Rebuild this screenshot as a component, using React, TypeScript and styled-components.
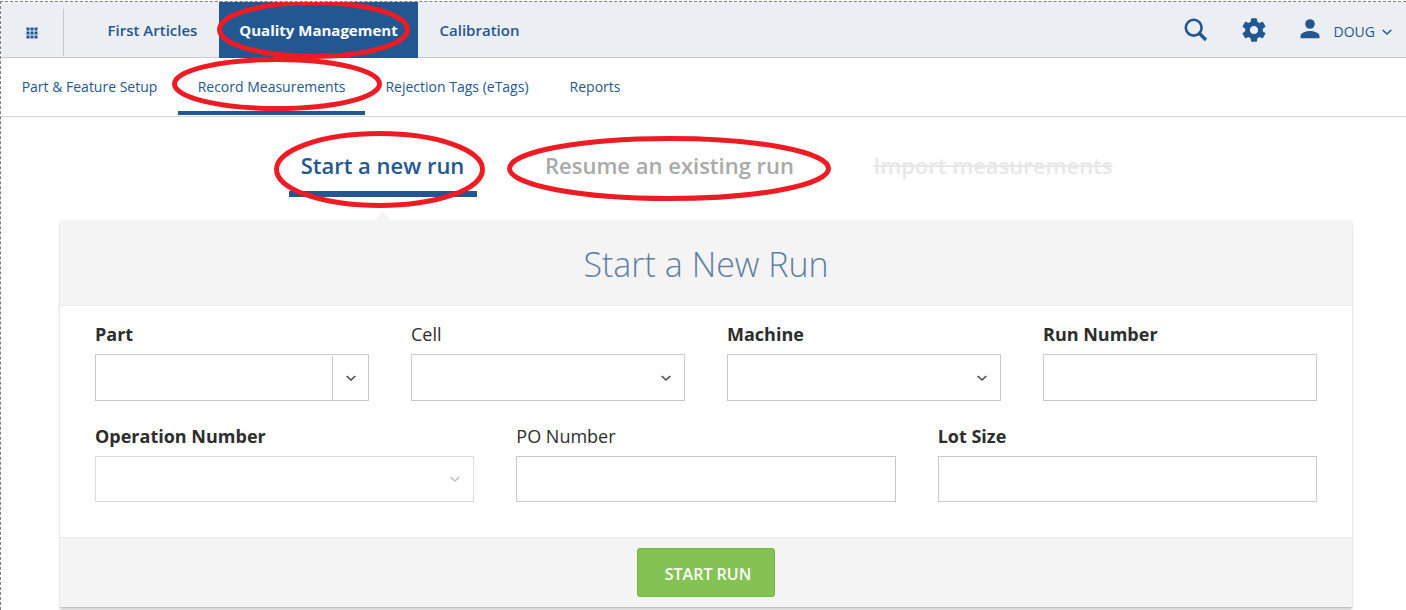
import React, { useId } from "react";
import styled, { createGlobalStyle, css } from "styled-components";

const navy = "#235791";
const red = "#ed1c24";

const GlobalStyle = createGlobalStyle`
  *, *::before, *::after { box-sizing: border-box; }
  body {
    margin: 0;
    background: #fff;
    color: #333;
    font-family: "Segoe UI", "Open Sans", "Noto Sans", sans-serif;
  }
  button, input, select { font: inherit; color: inherit; margin: 0; }
  a { text-decoration: none; }
`;

const Page = styled.div`
  margin-top: 1px;
  min-height: calc(100vh - 1px);
  border-top: 1px dashed #7d7d7d;
  border-left: 1px dashed #7d7d7d;
  overflow: hidden;
`;

const TopBar = styled.header`
  display: flex;
  align-items: stretch;
  height: 56px;
  background: #ebeef3;
  box-shadow: inset 0 -1px #c8cacd;
`;

const AppsCell = styled.div`
  display: flex;
  width: 63px;
  margin: 7px 22px 2px 0;
  border-right: 1px solid #c8cacd;
`;

const IconButton = styled.button`
  display: flex;
  align-items: center;
  justify-content: center;
  padding: 0;
  border: 0;
  background: none;
  color: ${navy};
  cursor: pointer;
`;

const AppsButton = styled(IconButton)`
  flex: 1;
`;

const MainNav = styled.nav`
  display: flex;
  flex: 1;
`;

const MainLink = styled.a<{ $active?: boolean; $width: number }>`
  position: relative;
  display: flex;
  align-items: center;
  justify-content: center;
  min-width: ${(p) => p.$width}px;
  white-space: nowrap;
  font-size: 15px;
  line-height: 20px;
  font-weight: ${(p) => (p.$active ? 700 : 600)};
  color: ${(p) => (p.$active ? "#fff" : navy)};
  background: ${(p) => (p.$active ? navy : "transparent")};
`;

const Tools = styled.div`
  display: flex;
  align-items: center;
  gap: 34px;
  padding-right: 13px;
`;

const UserButton = styled(IconButton)`
  gap: 14px;
  font-size: 14px;
  line-height: 20px;
`;

const UserName = styled.span`
  display: flex;
  align-items: center;
  gap: 6px;
  padding-top: 4px;
`;

const SubNav = styled.nav`
  display: flex;
  height: 59px;
  border-bottom: 1px solid #d4d4d4;
`;

const SubLink = styled.a<{ $active?: boolean; $width: number }>`
  position: relative;
  display: flex;
  align-items: center;
  justify-content: center;
  min-width: ${(p) => p.$width}px;
  white-space: nowrap;
  font-size: 14px;
  line-height: 20px;
  color: ${navy};
  box-shadow: ${(p) => (p.$active ? `inset 0 -1px #fff, inset 0 -5px ${navy}` : "none")};
`;

const Content = styled.main`
  padding: 0 54px 0 59px;
`;

const RunTabs = styled.div`
  display: flex;
  justify-content: center;
  gap: 57px;
  padding: 14px 0 23px;
`;

const RunTab = styled.button<{ $active?: boolean; $width: number }>`
  position: relative;
  min-width: ${(p) => p.$width}px;
  height: 66px;
  padding: 8px 0 0;
  border: 0;
  border-bottom: 6px solid ${(p) => (p.$active ? navy : "transparent")};
  background: none;
  white-space: nowrap;
  font-size: 22px;
  line-height: 30px;
  font-weight: 600;
  color: ${(p) => (p.$active ? navy : "#a9a9a9")};
  &:disabled {
    color: #e8e8e8;
    text-decoration: line-through;
  }
  ${(p) =>
    p.$active &&
    css`
      &::after {
        content: "";
        position: absolute;
        left: 50%;
        bottom: -29px;
        margin-left: -8px;
        border: 8px solid transparent;
        border-top: 0;
        border-bottom-color: #f4f4f4;
      }
    `}
`;

const RingSvg = styled.svg<{ $left: number; $top: number }>`
  position: absolute;
  z-index: 2;
  left: ${(p) => p.$left}px;
  top: ${(p) => p.$top}px;
  pointer-events: none;
`;

const Card = styled.form`
  background: #fff;
  box-shadow: 0 3px 3px rgba(0, 0, 0, 0.18), 0 1px 1px rgba(0, 0, 0, 0.08);
`;

const CardHeader = styled.div`
  padding: 22px 0 19px;
  background: #f4f4f4;
  border-bottom: 1px solid #e9e9e9;
  text-align: center;
`;

const Title = styled.h1`
  margin: 0;
  font-size: 34px;
  line-height: 44px;
  font-weight: 300;
  color: #5f7fa3;
`;

const CardBody = styled.div`
  display: grid;
  gap: 23px;
  padding: 16px 35px 35px;
`;

const FieldRow = styled.div<{ $columns: number }>`
  display: grid;
  grid-template-columns: repeat(${(p) => p.$columns}, minmax(0, 1fr));
  gap: 42px;
`;

const Field = styled.div`
  display: flex;
  flex-direction: column;
  gap: 8px;
`;

const Label = styled.label<{ $required?: boolean }>`
  font-size: 18px;
  line-height: 24px;
  font-weight: ${(p) => (p.$required ? 700 : 400)};
  color: #2d2d2d;
`;

const Box = styled.div<{ $disabled?: boolean; $short?: boolean }>`
  position: relative;
  display: flex;
  height: ${(p) => (p.$short ? 46 : 47)}px;
  border: 1px solid ${(p) => (p.$disabled ? "#dedede" : "#c8c8c8")};
  color: ${(p) => (p.$disabled ? "#bcbcbc" : "#444")};
`;

const TextInput = styled.input`
  flex: 1;
  min-width: 0;
  padding: 0 12px;
  border: 0;
  background: none;
  font-size: 16px;
`;

const Select = styled.select`
  flex: 1;
  min-width: 0;
  padding: 0 40px 0 12px;
  border: 0;
  background: none;
  appearance: none;
  font-size: 16px;
`;

const SelectArrow = styled.span`
  position: absolute;
  right: 12px;
  top: 50%;
  display: flex;
  transform: translateY(-50%);
  pointer-events: none;
`;

const OpenButton = styled(IconButton)`
  width: 36px;
  margin-top: 1px;
  border-left: 1px solid #c8c8c8;
  color: #444;
`;

const CardFooter = styled.div`
  display: flex;
  justify-content: center;
  padding: 10px;
  background: #f4f4f4;
  border-top: 1px solid #e9e9e9;
`;

const StartButton = styled.button`
  min-width: 138px;
  height: 49px;
  padding: 2px 0 0 4px;
  border: 1px solid #74b544;
  border-radius: 3px;
  background: #84c253;
  color: #fff;
  font-size: 16px;
  line-height: 24px;
  font-weight: 600;
`;

type RingProps = { left: number; top: number; width: number; height: number };

const Ring = ({ left, top, width, height }: RingProps) => (
  <RingSvg $left={left} $top={top} width={width} height={height} aria-hidden="true">
    <ellipse
      cx={width / 2}
      cy={height / 2}
      rx={width / 2 - 2.5}
      ry={height / 2 - 2.5}
      fill="none"
      stroke={red}
      strokeWidth="5"
    />
  </RingSvg>
);

const Chevron = () => (
  <svg width="12" height="12" viewBox="0 0 12 12" fill="none" stroke="currentColor" strokeWidth="1.5" aria-hidden="true">
    <path d="M1.700 4L6 8L10.300 4" />
  </svg>
);

const AppsIcon = () => (
  <svg width="12" height="12" fill="currentColor" aria-hidden="true">
    {[0, 4, 8].map((y) =>
      [0, 4, 8].map((x) => <rect key={`${x}-${y}`} x={x + 0.5} y={y + 0.5} width="3" height="3" />)
    )}
  </svg>
);

const SearchIcon = () => (
  <svg width="24" height="24" fill="none" stroke="currentColor" aria-hidden="true">
    <circle cx="9.7" cy="9.7" r="7.9" strokeWidth="2.6" />
    <path d="M15.3 15.3L22 22" strokeWidth="3.4" />
  </svg>
);

const GearIcon = () => (
  <svg width="24" height="24" viewBox="1.8 1.8 20.4 20.4" fill="currentColor" aria-hidden="true">
    <path d="M19.43 12.98c.04-.32.07-.64.07-.98s-.03-.66-.07-.98l2.11-1.65c.19-.15.24-.42.12-.64l-2-3.46c-.12-.22-.39-.3-.61-.22l-2.49 1c-.52-.4-1.08-.73-1.69-.98l-.38-2.65C14.46 2.18 14.25 2 14 2h-4c-.25 0-.46.18-.49.42l-.38 2.65c-.61.25-1.17.59-1.69.98l-2.49-1c-.23-.09-.49 0-.61.22l-2 3.46c-.13.22-.07.49.12.64l2.11 1.65c-.04.32-.07.65-.07.98s.03.66.07.98l-2.11 1.65c-.19.15-.24.42-.12.64l2 3.46c.12.22.39.3.61.22l2.49-1c.52.4 1.08.73 1.69.98l.38 2.65c.03.24.24.42.49.42h4c.25 0 .46-.18.49-.42l.38-2.65c.61-.25 1.17-.59 1.69-.98l2.49 1c.23.09.49 0 .61-.22l2-3.46c.12-.22.07-.49-.12-.64l-2.11-1.65zM12 15.5c-1.93 0-3.5-1.57-3.5-3.5s1.57-3.5 3.5-3.5 3.5 1.57 3.5 3.5-1.57 3.5-3.5 3.5z" />
  </svg>
);

const UserIcon = () => (
  <svg width="20" height="22" viewBox="0 0 20 22" fill="currentColor" aria-hidden="true">
    <circle cx="10" cy="5" r="4.8" />
    <path d="M.5 19.2v-2.200c0-3.300 6-5 9.500-5s9.500 1.700 9.500 5v2.200z" />
  </svg>
);

type FieldProps = {
  label: string;
  kind?: "text" | "select" | "combo";
  required?: boolean;
  disabled?: boolean;
  short?: boolean;
};

const FormField = ({ label, kind = "text", required, disabled, short }: FieldProps) => {
  const id = useId();
  return (
    <Field>
      <Label htmlFor={id} $required={required}>
        {label}
      </Label>
      <Box $disabled={disabled} $short={short}>
        {kind === "select" ? (
          <>
            <Select id={id} disabled={disabled} />
            <SelectArrow>
              <Chevron />
            </SelectArrow>
          </>
        ) : (
          <TextInput id={id} type="text" />
        )}
        {kind === "combo" && (
          <OpenButton type="button" aria-label="Show parts">
            <Chevron />
          </OpenButton>
        )}
      </Box>
    </Field>
  );
};

export default function App() {
  return (
    <>
      <GlobalStyle />
      <Page>
        <TopBar>
          <AppsCell>
            <AppsButton type="button" aria-label="Apps">
              <AppsIcon />
            </AppsButton>
          </AppsCell>
          <MainNav>
            <MainLink href="#first-articles" $width={133}>
              First Articles
            </MainLink>
            <MainLink href="#quality" $active $width={199}>
              Quality Management
              <Ring left={-2} top={-2} width={193} height={59} />
            </MainLink>
            <MainLink href="#calibration" $width={123}>
              Calibration
            </MainLink>
          </MainNav>
          <Tools>
            <IconButton type="button" aria-label="Search">
              <SearchIcon />
            </IconButton>
            <IconButton type="button" aria-label="Settings">
              <GearIcon />
            </IconButton>
            <UserButton type="button">
              <UserIcon />
              <UserName>
                DOUG
                <Chevron />
              </UserName>
            </UserButton>
          </Tools>
        </TopBar>
        <SubNav>
          <SubLink href="#setup" $width={177}>
            Part &amp; Feature Setup
          </SubLink>
          <SubLink href="#record" $active $width={187}>
            Record Measurements
            <Ring left={-6} top={-1} width={210} height={54} />
          </SubLink>
          <SubLink href="#etags" $width={184}>
            Rejection Tags (eTags)
          </SubLink>
          <SubLink href="#reports" $width={92}>
            Reports
          </SubLink>
        </SubNav>
        <Content>
          <RunTabs>
            <RunTab type="button" $active $width={188}>
              Start a new run
              <Ring left={-15} top={0} width={211} height={77} />
            </RunTab>
            <RunTab type="button" $width={272}>
              Resume an existing run
              <Ring left={-27} top={5} width={324} height={65} />
            </RunTab>
            <RunTab type="button" disabled $width={261}>
              Import measurements
            </RunTab>
          </RunTabs>
          <Card onSubmit={(e) => e.preventDefault()}>
            <CardHeader>
              <Title>Start a New Run</Title>
            </CardHeader>
            <CardBody>
              <FieldRow $columns={4}>
                <FormField label="Part" kind="combo" required />
                <FormField label="Cell" kind="select" />
                <FormField label="Machine" kind="select" required />
                <FormField label="Run Number" required />
              </FieldRow>
              <FieldRow $columns={3}>
                <FormField label="Operation Number" kind="select" required disabled short />
                <FormField label="PO Number" short />
                <FormField label="Lot Size" required short />
              </FieldRow>
            </CardBody>
            <CardFooter>
              <StartButton type="submit">START RUN</StartButton>
            </CardFooter>
          </Card>
        </Content>
      </Page>
    </>
  );
}
